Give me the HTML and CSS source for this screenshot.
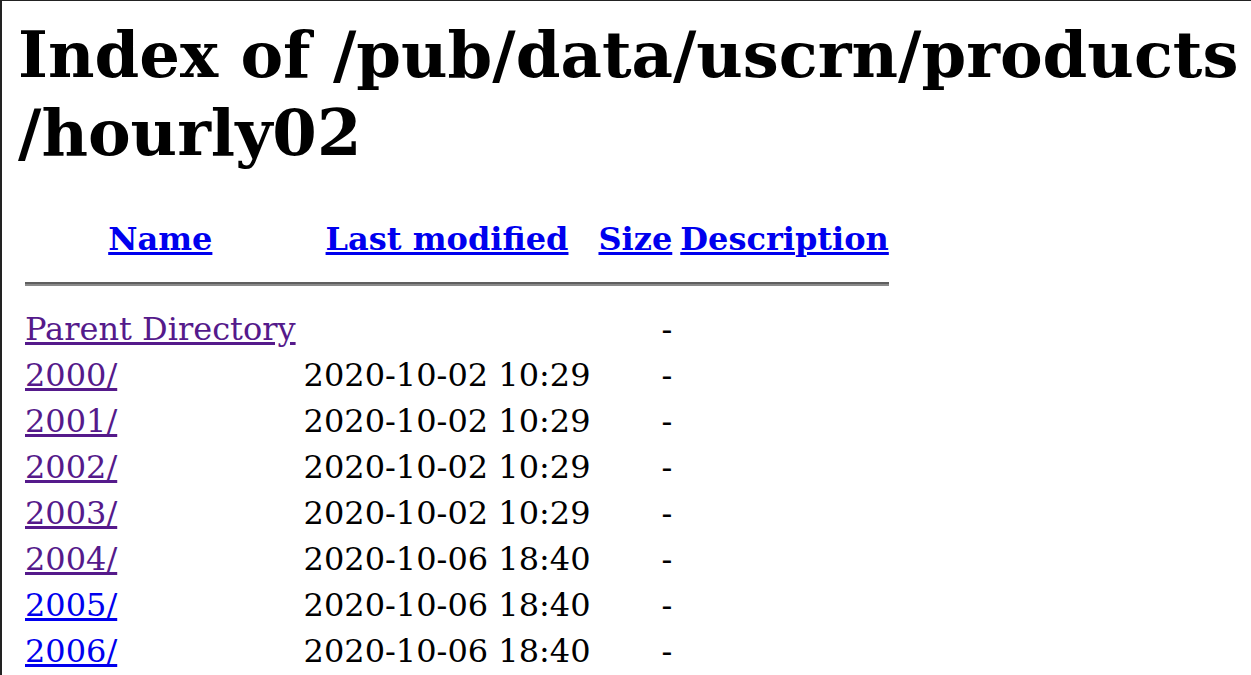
FILE: index.html
```html
<!DOCTYPE html>
<html>
<head>
<meta charset="utf-8">
<title>Index of /pub/data/uscrn/products/hourly02</title>
<link rel="stylesheet" href="styles.css">
</head>
<body>
<div class="page">
<h1 class="title">Index of /pub/data/uscrn/products<br>/hourly02</h1>
<table class="listing">
<tr><th><a href="#">Name</a></th><th><a href="#">Last modified</a></th><th><a href="#">Size</a></th><th><a href="#">Description</a></th></tr>
<tr><th colspan="4"><hr class="rule"></th></tr>
<tr><td><a class="visited" href="#">Parent Directory</a></td><td>&nbsp;</td><td class="size">-</td><td>&nbsp;</td></tr>
<tr><td><a class="visited" href="#">2000/</a></td><td>2020-10-02 10:29</td><td class="size">-</td><td>&nbsp;</td></tr>
<tr><td><a class="visited" href="#">2001/</a></td><td>2020-10-02 10:29</td><td class="size">-</td><td>&nbsp;</td></tr>
<tr><td><a class="visited" href="#">2002/</a></td><td>2020-10-02 10:29</td><td class="size">-</td><td>&nbsp;</td></tr>
<tr><td><a class="visited" href="#">2003/</a></td><td>2020-10-02 10:29</td><td class="size">-</td><td>&nbsp;</td></tr>
<tr><td><a class="visited" href="#">2004/</a></td><td>2020-10-06 18:40</td><td class="size">-</td><td>&nbsp;</td></tr>
<tr><td><a href="#">2005/</a></td><td>2020-10-06 18:40</td><td class="size">-</td><td>&nbsp;</td></tr>
<tr><td><a href="#">2006/</a></td><td>2020-10-06 18:40</td><td class="size">-</td><td>&nbsp;</td></tr>
<tr><td><a href="#">2007/</a></td><td>2020-10-06 18:40</td><td class="size">-</td><td>&nbsp;</td></tr>
</table>
</div>
</body>
</html>
```
FILE: styles.css
```css
html, body {
  margin: 0;
  padding: 0;
  background: #fff;
  overflow: hidden;
}
.page {
  height: 675px;
  box-sizing: border-box;
  overflow: hidden;
  border-left: 2px solid #222;
  border-top: 1px solid #222;
  padding: 0 16px;
  font-family: "DejaVu Serif", serif;
  font-size: 32px;
  color: #000;
}
.title {
  font-size: 64px;
  font-weight: bold;
  white-space: nowrap;
  line-height: 78px;
  margin: 15px 0 42px 0;
}
.listing {
  border-collapse: separate;
  border-spacing: 4px;
  margin-left: 1px;
  margin-top: 8px;
}
.listing th, .listing td {
  padding: 2px;
}
.listing th {
  font-weight: bold;
  text-align: center;
}
.listing td {
  text-align: left;
}
.listing td.size {
  text-align: right;
}
a {
  color: #0000ee;
}
a.visited {
  color: #551a8b;
}
.rule {
  margin: 16px 0;
  height: 0;
  border: 0;
  border-top: 2px solid #5f5f5f;
  border-bottom: 2px solid #8a8a8a;
}
```
